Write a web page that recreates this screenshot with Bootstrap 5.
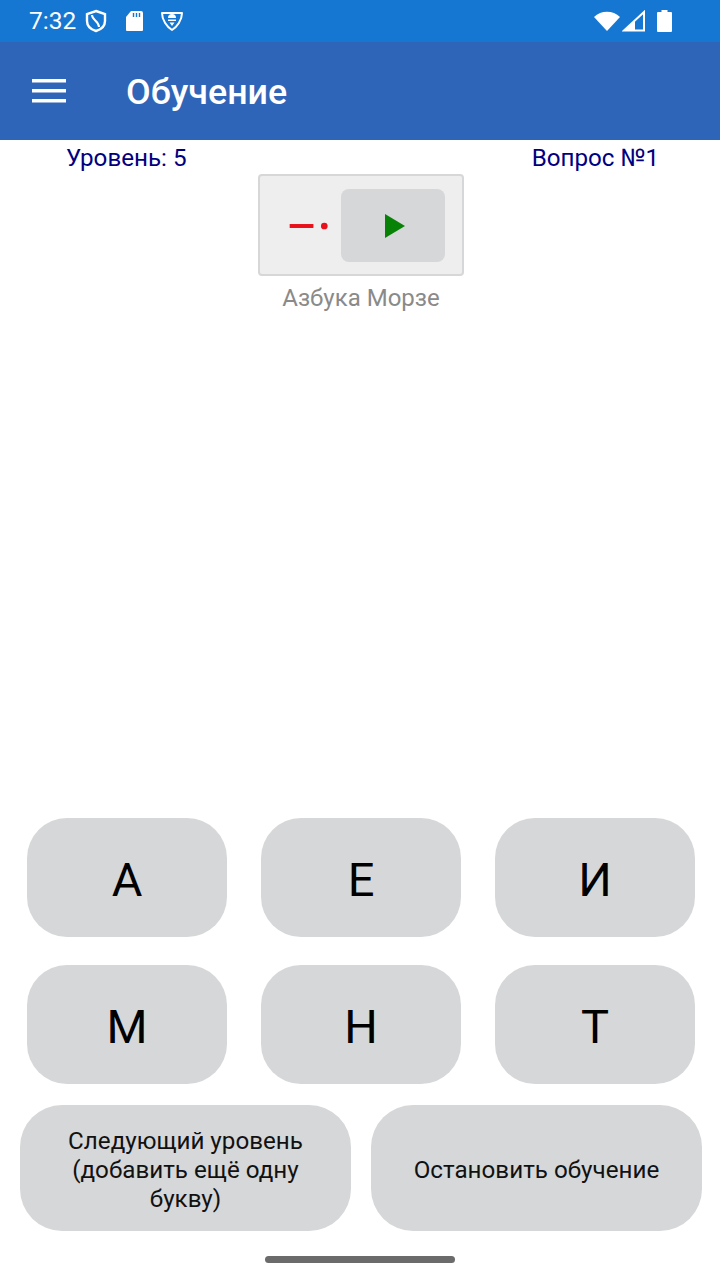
<!DOCTYPE html>
<html lang="ru">
<head>
  <meta charset="UTF-8" />
  <meta name="viewport" content="width=device-width, initial-scale=1" />
  <title>Обучение</title>
  <link rel="stylesheet" href="https://cdn.jsdelivr.net/npm/bootstrap@5.3.0/dist/css/bootstrap.min.css" />
  <style>
    body { font-family: Roboto, "Liberation Sans", sans-serif; background: #fff; }
    .phone-screen { width: 720px; height: 1280px; overflow: hidden; }
    .status-strip { height: 42px; background: #1577d2; color: #fff; font-size: 24.5px; padding: 0 48px 0 29px; }
    .status-time { width: 49px; margin-right: 7px; line-height: 1; }
    .icon-sd { margin-left: 17px; }
    .icon-vpn { margin-left: 16px; }
    .icon-signal { margin-left: 2px; }
    .icon-battery { margin-left: 11px; }
    .app-strip { height: 98px; background: #2f65b8; color: #fff; padding-left: 32px; }
    .app-title { font-size: 35.8px; font-weight: 500; margin-left: 60px; line-height: 1; padding-top: 3px; }
    .info-row { height: 34px; padding: 1px 61px 0 66px; color: #000080; font-size: 24.2px; line-height: 34px; }
    .morse-wrap { padding-left: 2px; }
    .morse-box { width: 206px; height: 102px; background: #eee; border: 2px solid #d6d7d8; border-radius: 4px; padding: 13px 17px 12px 0; }
    .morse-signal { width: 82px; }
    .play-box { width: 105px; height: 73px; background: #d6d7d8; border-radius: 8px; padding-left: 4px; }
    .morse-label { color: #8a8a8a; font-size: 24px; line-height: 30px; margin-top: 7px; }
    .answer-pad { padding: 0 25px 0 27px; gap: 28px 34px; display: grid; grid-template-columns: repeat(3, 200px); }
    .answer-btn { height: 119px; background: #d6d7d8; border: 0; border-radius: 40px; color: #000; font-size: 47px; line-height: 1; padding: 4px 0 0; }
    .action-row { padding: 0 18px 0 20px; margin-top: 21px; gap: 20px; }
    .action-btn { width: 331px; height: 126px; background: #d6d7d8; border: 0; border-radius: 42px; color: #111; font-size: 24.2px; line-height: 29px; padding: 4px 24px 0; }
    .home-bar { width: 190px; height: 7px; background: #6b6b6b; border-radius: 4px; margin: 25px auto 17px; }
  </style>
</head>
<body>
  <div class="phone-screen d-flex flex-column">
    <!-- status bar -->
    <div class="status-strip d-flex align-items-center">
      <span class="status-time">7:32</span>
      <svg width="22" height="24" viewBox="0 0 22 24" fill="none" stroke="#fff" stroke-width="2.4"><path d="M11 2 L20 5 V12 C20 17 16 20.5 11 22 C6 20.5 2 17 2 12 V5 Z"/><path d="M7 6 C7 11 14 12 14 18" stroke-width="2"/></svg>
      <svg class="icon-sd" width="20" height="24" viewBox="0 0 20 24"><path fill="#fff" d="M7 2 H17 a2 2 0 0 1 2 2 V21 a1 1 0 0 1 -1 1 H3 a1 1 0 0 1 -1 -1 V8 Z"/><path stroke="#1577d2" stroke-width="1.4" d="M9.5 4 V8 M12.5 4 V8 M15.5 4 V8"/></svg>
      <svg class="icon-vpn" width="24" height="24" viewBox="0 0 24 24" fill="none" stroke="#fff" stroke-width="2"><path stroke-linejoin="round" d="M2 4 H22 C22 11 17 18 12 21 C7 18 2 11 2 4 Z"/><path fill="#fff" stroke="none" d="M8 9 a4 4 0 0 1 8 0 Z M8 10.5 H16 V12 H8 Z M9.5 13.5 H14.5 L12 17 Z"/></svg>
      <svg class="ms-auto" width="26" height="20" viewBox="0 0 26 20"><path fill="#fff" d="M0 6 C7 -1 19 -1 26 6 L13 20 Z"/></svg>
      <svg class="icon-signal" width="24" height="22" viewBox="0 0 24 22"><path fill="none" stroke="#fff" stroke-width="2" d="M2 20.5 L22 2 V20.5 Z"/><path fill="#fff" d="M2 20.5 L13 10 V20.5 Z"/></svg>
      <svg class="icon-battery" width="15" height="24" viewBox="0 0 15 24"><path fill="#fff" d="M4.5 1 H10.5 V3 H14 a1 1 0 0 1 1 1 V22 a1 1 0 0 1 -1 1 H1 a1 1 0 0 1 -1 -1 V4 a1 1 0 0 1 1 -1 H4.5 Z"/></svg>
    </div>

    <!-- app bar -->
    <div class="app-strip d-flex align-items-center">
      <svg width="34" height="24" viewBox="0 0 34 24" fill="#fff"><rect y="0" width="34" height="3.5"/><rect y="10" width="34" height="3.5"/><rect y="20" width="34" height="3.5"/></svg>
      <span class="app-title">Обучение</span>
    </div>

    <div class="info-row d-flex justify-content-between">
      <span>Уровень: 5</span>
      <span>Вопрос №1</span>
    </div>

    <div class="morse-wrap d-flex flex-column align-items-center">
      <div class="morse-box d-flex align-items-center">
        <svg class="morse-signal" height="14" viewBox="0 0 82 14" fill="#e8111a"><rect x="30" y="5" width="24" height="4"/><circle cx="65" cy="7" r="3.4"/></svg>
        <div class="play-box d-flex align-items-center justify-content-center">
          <svg width="20" height="24" viewBox="0 0 20 24" fill="#078207"><path d="M0 0 L20 12 L0 24 Z"/></svg>
        </div>
      </div>
      <div class="morse-label">Азбука Морзе</div>
    </div>

    <!-- answers -->
    <div class="answer-pad mt-auto">
      <button class="answer-btn">А</button>
      <button class="answer-btn">Е</button>
      <button class="answer-btn">И</button>
      <button class="answer-btn">М</button>
      <button class="answer-btn">Н</button>
      <button class="answer-btn">Т</button>
    </div>

    <div class="action-row d-flex">
      <button class="action-btn">Следующий уровень (добавить ещё одну букву)</button>
      <button class="action-btn">Остановить обучение</button>
    </div>

    <div class="home-bar flex-shrink-0"></div>
  </div>

  <script src="https://cdn.jsdelivr.net/npm/bootstrap@5.3.0/dist/js/bootstrap.bundle.min.js"></script>
</body>
</html>
